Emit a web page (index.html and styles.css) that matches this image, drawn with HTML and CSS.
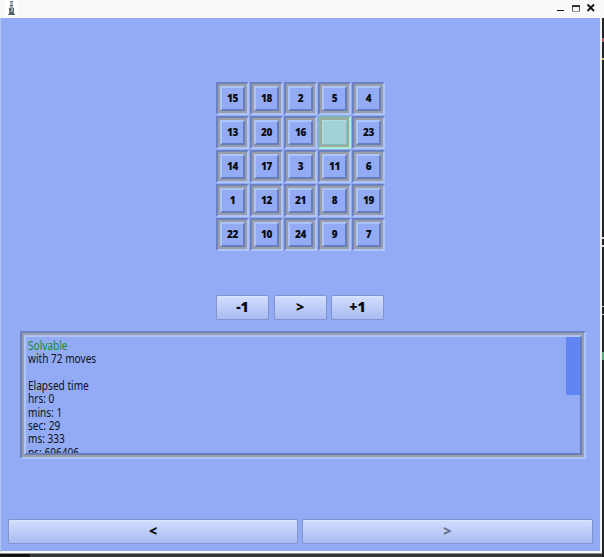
FILE: index.html
```
<!DOCTYPE html>
<html lang="en">
<head>
<meta charset="utf-8">
<title>Puzzle solver</title>
<link rel="stylesheet" href="styles.css">
</head>
<body>
<div class="window">
  <header class="titlebar">
    <svg class="app-icon" width="16" height="18" viewBox="0 0 16 18"><path fill="#fff" d="M0 0h12v16H0z"/><path fill="#59646a" d="M5 1h3v1H5z"/><path fill="#aab5ba" d="M5 2h3v3H5z"/><path fill="#657178" d="M5 5h3v1H5z"/><path fill="#9ba9b0" d="M5 6h3l1 5H4z"/><path fill="#56646a" d="M4 8h2v3H4zM8 8h1v3H8zM4 12h5v2h1v1H3v-1h1z"/><path fill="#829097" d="M4 11h5v1H4z"/></svg>
    <svg class="controls" width="40" height="18" viewBox="0 0 40 18"><path fill="#111" d="M1 10h7v1H1z"/><path fill="#999" d="M16 11h8v1h-8z"/><path fill="none" stroke="#555" d="M16.500 11V5M23.500 11V5"/><path fill="#333" d="M16 5h8v2h-8z"/><path stroke="#111" stroke-width="1.800" d="M31.500 4.500l6.500 6.500M38 4.500l-6.500 6.500"/></svg>
  </header>
  <main class="content">
    <div class="board">
      <div class="cell"><b>15</b></div><div class="cell"><b>18</b></div><div class="cell"><b>2</b></div><div class="cell"><b>5</b></div><div class="cell"><b>4</b></div>
      <div class="cell"><b>13</b></div><div class="cell"><b>20</b></div><div class="cell"><b>16</b></div><div class="cell blank"><b></b></div><div class="cell"><b>23</b></div>
      <div class="cell"><b>14</b></div><div class="cell"><b>17</b></div><div class="cell"><b>3</b></div><div class="cell"><b>11</b></div><div class="cell"><b>6</b></div>
      <div class="cell"><b>1</b></div><div class="cell"><b>12</b></div><div class="cell"><b>21</b></div><div class="cell"><b>8</b></div><div class="cell"><b>19</b></div>
      <div class="cell"><b>22</b></div><div class="cell"><b>10</b></div><div class="cell"><b>24</b></div><div class="cell"><b>9</b></div><div class="cell"><b>7</b></div>
    </div>
    <div class="steps"><button>-1</button><button>&gt;</button><button>+1</button></div>
    <section class="log"><div class="log-frame"><div class="log-view">
      <div class="lines"><p class="ok">Solvable</p><p>with 72 moves</p><p>&nbsp;</p><p>Elapsed time</p><p>hrs: 0</p><p>mins: 1</p><p>sec: 29</p><p>ms: 333</p><p>ns: 696406</p></div>
      <div class="thumb"></div>
    </div></div></section>
    <nav class="pager"><button>&lt;</button><button disabled>&gt;</button></nav>
  </main>
</div>
<div class="backdrop"><i class="m1"></i><i class="m2"></i><i class="m3"></i><i class="m4"></i><i class="m5"></i><i class="m6"></i><i class="m7"></i></div>
</body>
</html>
```
FILE: styles.css
```
* { box-sizing: border-box; }
body { margin: 0; width: 604px; height: 557px; overflow: hidden; display: flex; align-items: flex-start; background: linear-gradient(90deg, #111 30px, #363837 30px); font-family: "Noto Sans", sans-serif; }
.window { width: 602px; flex: none; height: 554px; background: #92abf4; border-bottom: 1px solid #888d91; display: flex; flex-direction: column; }
.titlebar { width: 604px; height: 18px; flex: none; background: #faf9f7; display: flex; justify-content: space-between; position: relative; z-index: 1; }
.app-icon { margin-left: 5px; }
.controls { margin-right: 8px; }
.content { flex: 1; border-left: 1px solid #b5c4ef; border-right: 2px solid #f1f3fa; border-bottom: 2px solid #f8f9fd; display: flex; flex-direction: column; padding: 64px 7.500px 7px 7px; }
.board { display: grid; grid-template-columns: repeat(5, 33px); grid-template-rows: repeat(5, 33px); gap: 1px; margin-left: 208px; }
.cell { border: 2px solid; border-color: #6c82be #adc4fc #adc4fc #6c82be; }
.cell b { display: flex; width: 29px; height: 29px; align-items: center; justify-content: center; border: 2px solid #9c9ea7; padding-bottom: 1px; font: 800 10px/12px "Open Sans", sans-serif; letter-spacing: -.3px; position: relative; color: #080b12; }
.cell b::before { content: ""; position: absolute; inset: 0; border: 2px solid; border-color: #adc4fc #667dbb #667dbb #adc4fc; }
.cell.blank { border-color: #81b7aa #a9efd8 #a9efd8 #81b7aa; }
.blank b { background: #a1d1d9; border-color: #9bab9e; }
.blank b::before { border: 1px solid; border-color: #a8e2df #8abcbc #8abcbc #a8e2df; }
button { border: 1px solid #8094ce; border-radius: 2px; padding: 0 0 1px; background: linear-gradient(#d3defd, #a9bcf1); box-shadow: inset 0 1px #dce5ff, 0 0 1px #8297d1; font: 800 14px/20px "Open Sans", sans-serif; color: #080a10; }
.steps { display: flex; gap: 4.500px; margin: 44px 0 0 208px; }
.steps button { width: 53px; height: 25px; }
.log { margin: 11px 5.500px 0 12px; width: 566px; height: 128px; border: 2px solid; border-color: #6c82be #adc4fc #adc4fc #6c82be; }
.log-frame { height: 124px; border: 2px solid #9c9ea7; }
.log-view { height: 120px; border: 2px solid; border-color: #adc4fc #667dbb #667dbb #adc4fc; overflow: hidden; display: flex; justify-content: space-between; align-items: flex-start; }
.lines { padding: 2px 0 0 2px; transform: scaleX(.82); transform-origin: 2px 0; }
.lines p { margin: 0; font-size: 12.300px; line-height: 13.350px; white-space: nowrap; color: #0c1020; }
.lines .ok { color: #138a30; }
.thumb { width: 14px; height: 58px; background: #6186f3; }
.pager { display: flex; gap: 4px; margin-top: auto; height: 25px; }
.pager button { flex: 1; }
.pager button:disabled { color: #66718f; }
.backdrop { width: 2px; flex: none; height: 557px; background: #222426; position: relative; }
.backdrop i { position: absolute; left: 0; width: 2px; height: 2px; background: #ddd; }
.backdrop .m1 { top: 38px; height: 4px; background: #c35768; }
.backdrop .m2 { top: 58px; background: #d8cf67; }
.backdrop .m3 { top: 237px; }
.backdrop .m4 { top: 245px; }
.backdrop .m5 { top: 306px; height: 1px; }
.backdrop .m6 { top: 314px; height: 1px; }
.backdrop .m7 { top: 352px; height: 8px; background: #59a875; }
```
